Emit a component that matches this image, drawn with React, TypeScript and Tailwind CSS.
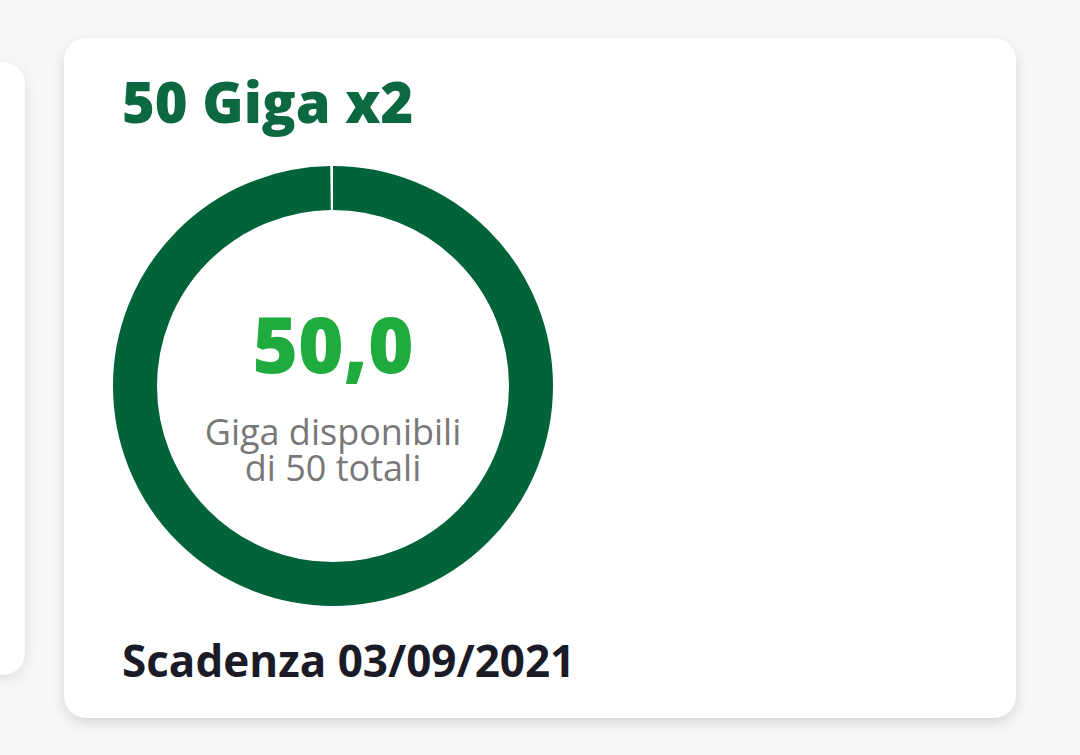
import React from "react";

const RING_R = 198;
const RING_C = 2 * Math.PI * RING_R;

function UsageRing({ used, total }: { used: number; total: number }) {
    // full ring with a hairline cut just left of twelve o'clock
    const gap = 3;
    return (
        <svg width="440" height="440" viewBox="0 0 440 440" className="absolute inset-0">
            <circle
                cx="220"
                cy="220"
                r={RING_R}
                fill="none"
                stroke="#00633a"
                strokeWidth="44"
                strokeDasharray={`${RING_C - gap} ${gap}`}
                transform="rotate(-90 220 220)"
                data-used={used}
                data-total={total}
            />
        </svg>
    );
}

function App() {
    return (
        <main
            className="w-full min-h-screen bg-[#f7f7f7] flex items-start overflow-hidden"
            style={{ fontFamily: '"Open Sans", "Noto Sans", sans-serif' }}
        >
            {/* previous offer card peeking in from the left */}
            <div className="mt-[62px] ml-[-275px] w-[300px] h-[613px] shrink-0 bg-white rounded-[22px] shadow-[0_4px_14px_rgba(0,0,0,0.10)]" />

            <section className="mt-[38px] ml-[39px] w-[952px] h-[680px] shrink-0 bg-white rounded-[22px] shadow-[0_5px_14px_rgba(0,0,0,0.13)] pt-[35px] pl-[58px] flex flex-col">
                <h1 className="text-[56px] leading-none font-extrabold text-[#0b6840]">50 Giga x2</h1>

                <div className="relative mt-[37px] ml-[-9px] w-[440px] h-[440px]">
                    <UsageRing used={0} total={50} />
                    <div className="relative flex flex-col items-center pt-[138px]">
                        <span className="text-[78px] leading-none font-extrabold text-[#1fab3d]">50,0</span>
                        <div className="mt-[32px] flex flex-col items-center text-[36px] leading-[36px] text-[#787878]">
                            <span>Giga disponibili</span>
                            <span>di 50 totali</span>
                        </div>
                    </div>
                </div>

                <p className="mt-[32px] text-[44px] leading-none font-bold text-[#1b1b28]">Scadenza 03/09/2021</p>
            </section>
        </main>
    );
}

export default App;
